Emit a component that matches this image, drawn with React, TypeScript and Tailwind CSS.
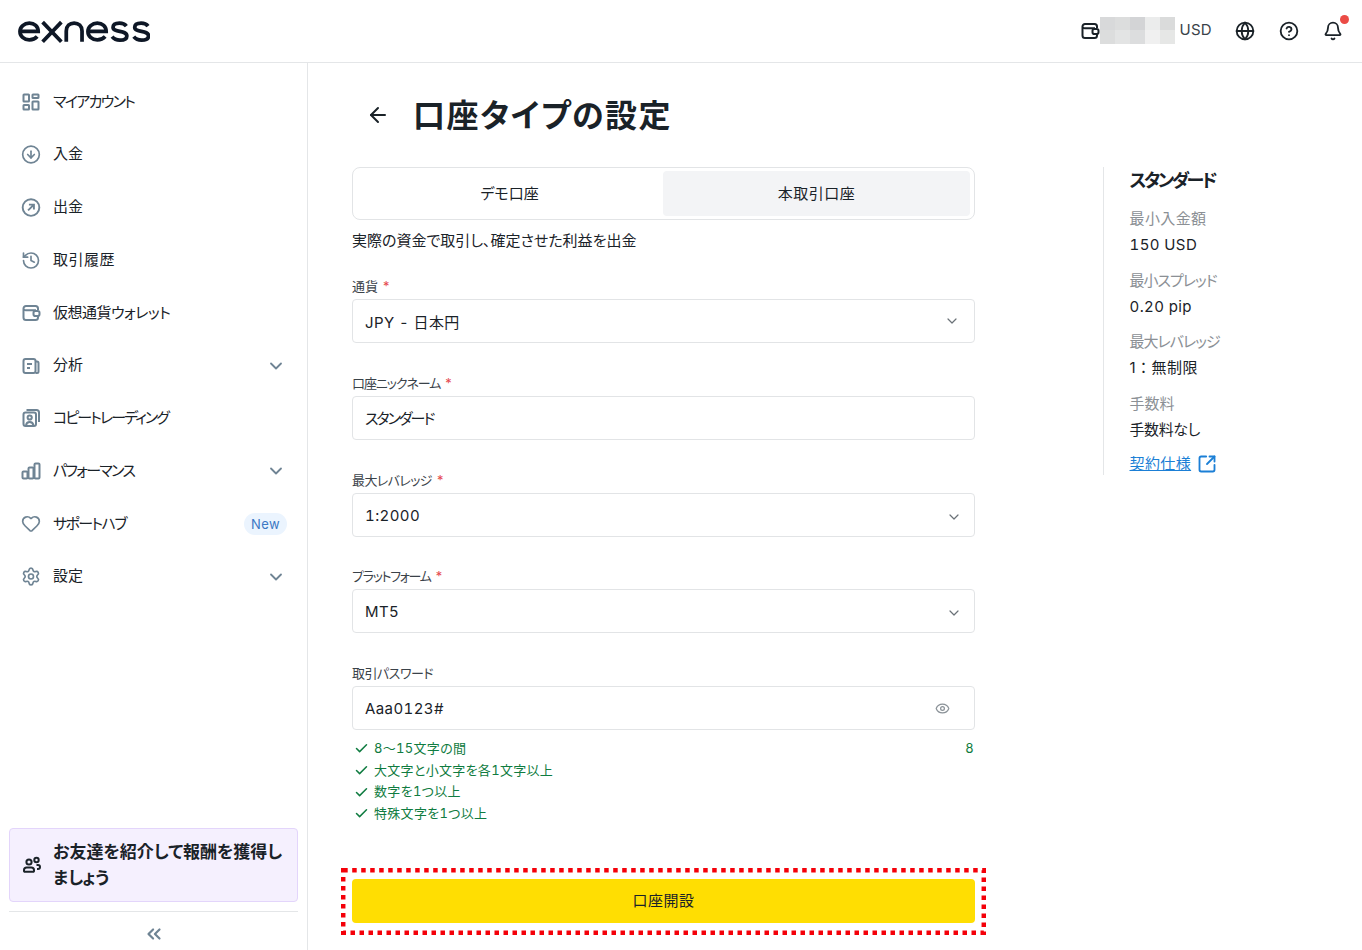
import type { ReactNode } from "react";
import {
  ArrowLeft,
  Bell,
  Check,
  ChevronDown,
  ChevronsLeft,
  CircleArrowDown,
  CircleHelp,
  Eye,
  Globe,
  Heart,
  History,
  Settings,
  SquareArrowOutUpRight,
} from "lucide-react";

function Logo() {
  return (
    <svg width="132" height="26" viewBox="0 0 134 26" fill="none" stroke="#0e1726" strokeWidth="3.8">
      <path d="M2 13.5h18.5c0-5-3.800-8.500-9-8.500s-9.500 3.800-9.500 8.500 4 8.500 9.500 8.500c3.500 0 6-1.200 8-3.500" />
      <path d="M25 4l19 20M44 4L25 24" />
      <path d="M49 24V13c0-5 3.500-8 8-8s8 3 8 8v11" />
      <path d="M71 13.500h18.500c0-5-3.800-8.500-9-8.500s-9.500 3.800-9.500 8.500 4 8.500 9.500 8.500c3.500 0 6-1.200 8-3.500" />
      <path d="M110 8c-1.500-2-4-3-7-3-3.500 0-6.500 1.300-6.500 4.200 0 6 14 2.300 14 8.800 0 3-3 4.300-7 4.300-3.500 0-6.200-1.200-8-3.500" />
      <path d="M132 8c-1.500-2-4-3-7-3-3.500 0-6.500 1.300-6.500 4.200 0 6 14 2.300 14 8.800 0 3-3 4.300-7 4.300-3.500 0-6.200-1.200-8-3.500" />
    </svg>
  );
}

function WalletIcon({ className }: { className: string }) {
  return (
    <svg viewBox="0 0 20 20" fill="none" stroke="currentColor" strokeWidth="2" className={className}>
      <path d="M17 7V5.500A2.500 2.500 0 0 0 14.500 3H5a2.500 2.500 0 0 0-2.500 2.500v9A2.500 2.500 0 0 0 5 17h9.500a2.500 2.500 0 0 0 2.500-2.500V13" />
      <path d="M2.800 6.500c.4.400 1.200.8 2.200.8h10" />
      <rect x="12.500" y="8" width="6" height="5" rx="1.800" />
    </svg>
  );
}

function GridIcon() {
  return (
    <svg viewBox="0 0 20 20" fill="none" stroke="currentColor" strokeWidth="2" className="size-5">
      <rect x="2.500" y="2.500" width="5.500" height="7" rx="0.500" />
      <rect x="11.500" y="2.500" width="6" height="3.500" rx="0.500" />
      <rect x="2.500" y="13" width="5.500" height="4.500" rx="0.500" />
      <rect x="11.500" y="9.500" width="6" height="8" rx="0.500" />
    </svg>
  );
}

function UpRightIcon() {
  return (
    <svg viewBox="0 0 24 24" fill="none" stroke="currentColor" strokeWidth="2.300" className="size-[21px]">
      <circle cx="12" cy="12" r="10" />
      <path d="M8.500 15.500l7-7M9.500 8.500h6v6" />
    </svg>
  );
}

function NewsIcon() {
  return (
    <svg viewBox="0 0 20 20" fill="none" stroke="currentColor" strokeWidth="2" className="size-5">
      <rect x="2.500" y="3" width="12" height="14" rx="2" />
      <path d="M14.500 5.500h1.500a1.500 1.500 0 0 1 1.500 1.500v8.500a1.500 1.500 0 0 1-1.500 1.500h-1.500M6 8h5M6 12h3" />
    </svg>
  );
}

function CopyIcon() {
  return (
    <svg viewBox="0 0 20 20" fill="none" stroke="currentColor" strokeWidth="2" className="size-5">
      <rect x="2.500" y="4.500" width="12.500" height="13.500" rx="2" />
      <circle cx="8.700" cy="9.500" r="2.100" />
      <path d="M5 17.500c.3-2.400 1.800-3.500 3.700-3.500s3.400 1.100 3.700 3.500" />
      <path d="M5.500 2h10a2.500 2.500 0 0 1 2.500 2.500V14" />
    </svg>
  );
}

function BarsIcon() {
  return (
    <svg viewBox="0 0 20 20" fill="none" stroke="currentColor" strokeWidth="2" className="size-5">
      <rect x="1.500" y="10.500" width="5" height="7" rx="1" />
      <rect x="7.500" y="6.500" width="5" height="11" rx="1" />
      <rect x="13.500" y="2.500" width="5" height="15" rx="1" />
    </svg>
  );
}

function PeopleIcon() {
  return (
    <svg viewBox="0 0 20 20" fill="none" stroke="#1a2228" strokeWidth="2" className="size-5 shrink-0">
      <circle cx="7" cy="7" r="2.600" />
      <path d="M2 16v-1c0-1.700 1.200-2.600 2.700-2.600h4.600c1.500 0 2.700.9 2.700 2.600v1a.8.8 0 0 1-.8.8H2.800A.8.8 0 0 1 2 16z" />
      <circle cx="14.500" cy="5" r="2.200" />
      <path d="M14.500 10h1.500c1.200 0 2 .8 2 2s-.8 2-2 2h-1" />
    </svg>
  );
}

const navItems: { label: string; icon: ReactNode; track?: string; chevron?: boolean; badge?: boolean }[] = [
  { label: "マイアカウント", icon: <GridIcon />, track: "tracking-[-1.700px]" },
  { label: "入金", icon: <CircleArrowDown className="size-[21px]" strokeWidth={2} /> },
  { label: "出金", icon: <UpRightIcon /> },
  { label: "取引履歴", icon: <History className="size-[21px]" strokeWidth={2} />, track: "tracking-[0.500px]" },
  { label: "仮想通貨ウォレット", icon: <WalletIcon className="size-5" />, track: "tracking-[-0.500px]" },
  { label: "分析", icon: <NewsIcon />, chevron: true },
  { label: "コピートレーディング", icon: <CopyIcon />, track: "tracking-[-1.900px]" },
  { label: "パフォーマンス", icon: <BarsIcon />, track: "tracking-[-1.700px]", chevron: true },
  { label: "サポートハブ", icon: <Heart className="size-[21px]" strokeWidth={2} />, track: "tracking-[-1.600px]", badge: true },
  { label: "設定", icon: <Settings className="size-[21px]" strokeWidth={2} />, chevron: true },
];

const mosaic = [
  "bg-[#d8d9da]", "bg-[#dcdddd]", "bg-[#d3d4d6]", "bg-[#ebecec]", "bg-[#dadbdb]",
  "bg-[#dcdddd]", "bg-[#e3e4e4]", "bg-[#dcddde]", "bg-[#f0f0f0]", "bg-[#e6e7e6]",
];

const specs = [
  { label: "最小入金額", value: "150 USD", labelTrack: "tracking-[0.400px]", valueTrack: "tracking-[0.400px]" },
  { label: "最小スプレッド", value: "0.20 pip", labelTrack: "tracking-[-1px]", valueTrack: "tracking-[0.400px]" },
  { label: "最大レバレッジ", value: "1：無制限", labelTrack: "tracking-[-1px]", valueTrack: "tracking-[0.500px] [font-feature-settings:normal]" },
  { label: "手数料", value: "手数料なし", labelTrack: "", valueTrack: "tracking-[-0.400px]" },
];

const rules = ["8～15文字の間", "大文字と小文字を各1文字以上", "数字を1つ以上", "特殊文字を1つ以上"];

function Label({ text, required, track = "" }: { text: string; required?: boolean; track?: string }) {
  return (
    <div className="h-[20px] text-[13px] leading-[14px] text-[#3a4249]">
      <span className={track}>{text}</span>
      {required && <span className="ml-1 text-[#e5484d]">*</span>}
    </div>
  );
}

function Field({
  label,
  value,
  required,
  select,
  track,
  valueClass = "translate-y-[1px]",
  chevronClass = "translate-x-[2px] translate-y-[2px]",
  gap = "mb-[33px]",
}: {
  label: string;
  value: string;
  required?: boolean;
  select?: boolean;
  track?: string;
  valueClass?: string;
  chevronClass?: string;
  gap?: string;
}) {
  return (
    <div className={gap}>
      <Label text={label} required={required} track={track} />
      <div className="flex h-[44px] items-center justify-between rounded border border-[#e2e4e6] pl-[12px] pr-[14px] text-[15px] tracking-[0.4px] text-[#1a2228]">
        <span className={valueClass}>{value}</span>
        {select && <ChevronDown className={`size-[16px] text-[#6b7278] ${chevronClass}`} strokeWidth={1.8} />}
      </div>
    </div>
  );
}

export default function App() {
  return (
    <div className="flex h-[950px] flex-col overflow-hidden bg-white font-['Inter','Noto_Sans_CJK_JP',sans-serif] text-[#1a2228] [font-feature-settings:'palt','tnum']">
      <header className="flex h-[63px] shrink-0 items-center justify-between border-b border-[#e4e6e8] pl-[18px] pr-[19px]">
        <Logo />
        <div className="flex items-center pb-[2px]">
          <WalletIcon className="size-[20px] translate-y-[1px] text-[#1a2228]" />
          <div className="grid h-[27px] w-[75px] grid-cols-5">
            {mosaic.map((c, i) => (
              <div key={i} className={c} />
            ))}
          </div>
          <span className="ml-[4px] mr-[23px] text-[15px] tracking-[0.3px] text-[#3a4249]">USD</span>
          <Globe className="mr-[24px] size-[20px] translate-y-[1px]" strokeWidth={2.2} />
          <CircleHelp className="mr-[24px] size-[20px] translate-y-[1px]" strokeWidth={2.2} />
          <div className="relative translate-y-[1px]">
            <Bell className="size-[20px]" strokeWidth={2.2} />
            <span className="absolute right-[-6px] top-[-6px] size-[9px] rounded-full bg-[#eb4b45]" />
          </div>
        </div>
      </header>

      <div className="flex min-h-0 flex-1">
        <aside className="flex w-[308px] shrink-0 flex-col justify-between border-r border-[#e4e6e8] pt-[12.500px]">
          <nav>
            {navItems.map((item) => (
              <div key={item.label} className="flex h-[52.750px] items-center pl-[21px] pr-[21px]">
                <span className="flex w-[20px] justify-center text-[#6f8494]">{item.icon}</span>
                <span className={`ml-[12px] flex-1 text-[15px] text-[#1a2228] ${item.track ?? ""}`}>{item.label}</span>
                {item.chevron && <ChevronDown className="size-[20px] text-[#6f8494]" strokeWidth={2.2} />}
                {item.badge && (
                  <span className="ml-auto mr-[-1px] rounded-full bg-[#ebf4fe] px-[7px] py-[2px] text-[13px] leading-[18px] tracking-[0.4px] text-[#3b78c4]">
                    New
                  </span>
                )}
              </div>
            ))}
          </nav>
          <div className="px-[9px]">
            <div className="flex h-[74px] items-center rounded border border-[#e3d5fb] bg-[#f5f0fe] pl-[12px] pr-[8px]">
              <PeopleIcon />
              <span className="ml-[11px] text-[17px] font-bold leading-[26px] text-[#1a2228]">
                お友達を紹介して報酬を獲得しましょう
              </span>
            </div>
            <div className="mt-[9px] flex h-[39px] items-center justify-center border-t border-[#e4e6e8] pt-[5px]">
              <ChevronsLeft className="size-[22px] text-[#6f8494]" strokeWidth={2.4} />
            </div>
          </div>
        </aside>

        <main className="flex flex-1 pl-[44px]">
          <div className="w-[623px]">
            <div className="flex h-[104px] items-center">
              <ArrowLeft className="ml-[14px] size-[24px]" strokeWidth={2} />
              <h1 className="ml-[23px] mt-[1px] text-[32px] font-bold tracking-[1.500px] text-[#1a2228]">口座タイプの設定</h1>
            </div>
            <div className="flex h-[53px] rounded-lg border border-[#e2e4e6] p-[3px] pr-[4px] text-[15px]">
              <div className="flex flex-1 items-center justify-center pt-[2px]">デモ口座</div>
              <div className="flex flex-1 items-center justify-center rounded bg-[#f3f4f6] pt-[2px] tracking-[0.5px]">本取引口座</div>
            </div>
            <p className="mb-[27px] mt-[10px] h-[22px] text-[15px] leading-[22px]">実際の資金で取引し、確定させた利益を出金</p>
            <Field label="通貨" value="JPY - 日本円" required select valueClass="translate-y-[2px]" chevronClass="" />
            <Field label="口座ニックネーム" value="スタンダード" required track="tracking-[-1.100px]" valueClass="translate-y-[1px] tracking-[-2px]" />
            <Field label="最大レバレッジ" value="1:2000" required select track="tracking-[-0.600px]" gap="mb-[32px]" />
            <Field label="プラットフォーム" value="MT5" required select track="tracking-[-1.300px]" />
            <div>
              <Label text="取引パスワード" track="tracking-[-0.500px]" />
              <div className="flex h-[44px] items-center justify-between rounded border border-[#e2e4e6] pl-[12px] pr-[24px] text-[15px] tracking-[0.4px]">
                <span className="translate-y-[1px]">Aaa0123#</span>
                <Eye className="size-[15px] text-[#8a9197]" strokeWidth={2} />
              </div>
              <div className="mt-[8px] text-[13px] leading-[21.700px] tracking-[0.3px] text-[#107c41]">
                {rules.map((rule, i) => (
                  <div key={rule} className="flex items-center">
                    <Check className="ml-[2px] mr-[5px] size-[15px]" strokeWidth={2.4} />
                    <span className="flex-1">{rule}</span>
                    {i === 0 && <span className="mr-[1px]">8</span>}
                  </div>
                ))}
              </div>
            </div>
            <div className="relative mt-[54px]">
              <div className="flex h-[44px] items-center justify-center rounded bg-[#ffde02] text-[15px] tracking-[0.5px] text-[#1a2228]">口座開設</div>
              <svg className="pointer-events-none absolute left-[-11px] top-[-11px] h-[67px] w-[645px]" fill="none">
                <rect x="2.200" y="2.200" width="640.600" height="62.600" stroke="#f40009" strokeWidth="4.500" strokeDasharray="4.500 4.500" />
              </svg>
            </div>
          </div>

          <section className="ml-[128px] mt-[104px] h-[308px] w-[140px] border-l border-[#e4e6e8] pl-[25.500px]">
            <h2 className="mb-[13px] mt-[2px] text-[18px] font-bold leading-[24px] tracking-[-2.500px]">スタンダード</h2>
            {specs.map((s) => (
              <div key={s.label} className="mb-[9.700px]">
                <div className="h-[25px] text-[15px] leading-[25px] text-[#8b9095]">
                  <span className={s.labelTrack}>{s.label}</span>
                </div>
                <div className={`h-[27px] text-[15px] leading-[27px] ${s.valueTrack}`}>{s.value}</div>
              </div>
            ))}
            <div className="mt-[8px] flex items-center text-[#1b7fd6]">
              <span className="text-[15px] tracking-[0.4px] underline">契約仕様</span>
              <SquareArrowOutUpRight className="ml-[6px] size-[20px]" strokeWidth={2.2} />
            </div>
          </section>
        </main>
      </div>
    </div>
  );
}
